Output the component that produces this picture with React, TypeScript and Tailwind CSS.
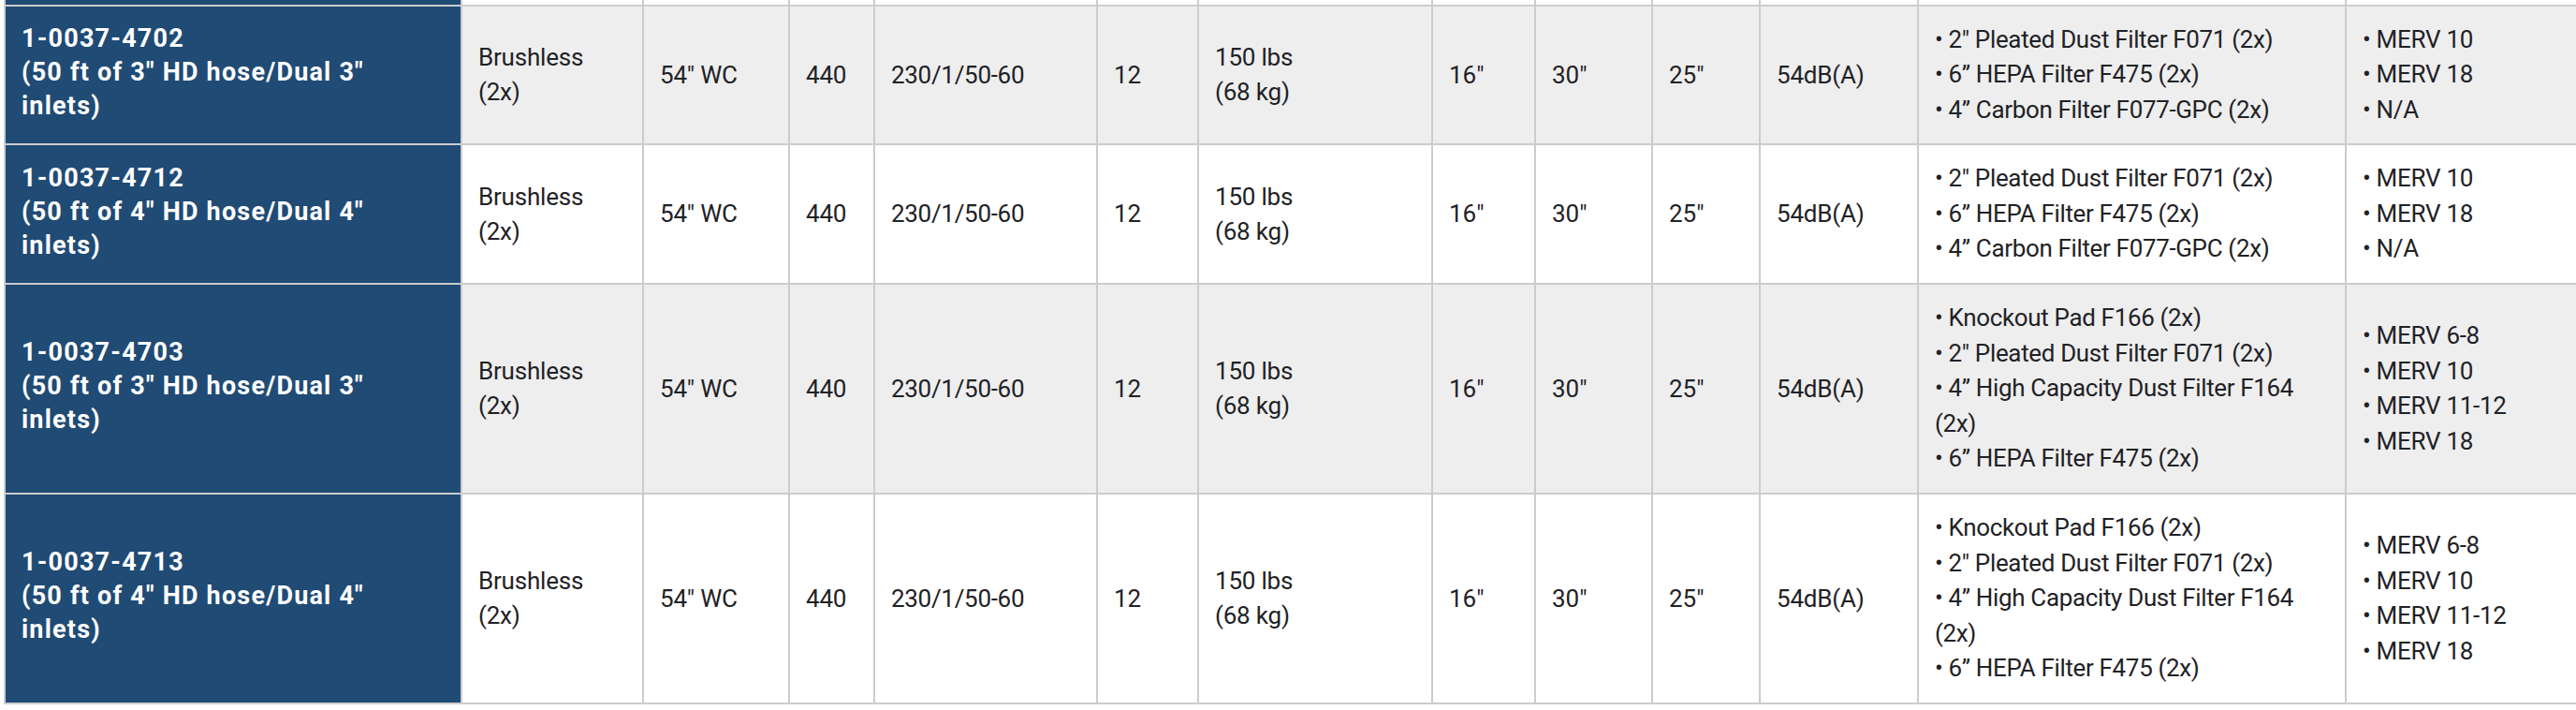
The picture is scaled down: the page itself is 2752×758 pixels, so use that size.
import React from "react";

type Row = {
  model: string;
  desc: string;
  filters: string[][];
  merv: string[];
  gray: boolean;
  h: string;
};

const filtersA = [
  ['2" Pleated Dust Filter F071 (2x)'],
  ["6\u201D HEPA Filter F475 (2x)"],
  ["4\u201D Carbon Filter F077-GPC (2x)"],
];
const filtersB = [
  ["Knockout Pad F166 (2x)"],
  ['2" Pleated Dust Filter F071 (2x)'],
  ["4\u201D High Capacity Dust Filter F164", "(2x)"],
  ["6\u201D HEPA Filter F475 (2x)"],
];

const rows: Row[] = [
  {
    model: "1-0037-4702",
    desc: '(50 ft of 3" HD hose/Dual 3"',
    filters: filtersA,
    merv: ["MERV 10", "MERV 18", "N/A"],
    gray: true,
    h: "h-[148px]",
  },
  {
    model: "1-0037-4712",
    desc: '(50 ft of 4" HD hose/Dual 4"',
    filters: filtersA,
    merv: ["MERV 10", "MERV 18", "N/A"],
    gray: false,
    h: "h-[149px]",
  },
  {
    model: "1-0037-4703",
    desc: '(50 ft of 3" HD hose/Dual 3"',
    filters: filtersB,
    merv: ["MERV 6-8", "MERV 10", "MERV 11-12", "MERV 18"],
    gray: true,
    h: "h-[224px]",
  },
  {
    model: "1-0037-4713",
    desc: '(50 ft of 4" HD hose/Dual 4"',
    filters: filtersB,
    merv: ["MERV 6-8", "MERV 10", "MERV 11-12", "MERV 18"],
    gray: false,
    h: "h-[226px] border-b-2",
  },
];

const cell = "flex items-center border-r-2 border-[#cccccc] px-[17px] shrink-0";

function Cells({ r }: { r: Row }) {
  return (
    <>
      <div className={`${cell} w-[488px] bg-[#204b75] pb-[6px]`}>
        <div className="font-bold text-white text-[27px] leading-[36px] tracking-[1.2px] whitespace-nowrap">
          {r.model}
          <br />
          {r.desc}
          <br />
          inlets)
        </div>
      </div>
      <div className={`${cell} w-[194px] tracking-[-0.2px]`}>
        <div className="leading-[37px]">
          Brushless
          <br />
          (2x)
        </div>
      </div>
      <div className={`${cell} w-[156px] tracking-[-0.2px]`}>54" WC</div>
      <div className={`${cell} w-[91px] tracking-[-0.2px]`}>440</div>
      <div className={`${cell} w-[238px] tracking-[-0.3px]`}>230/1/50-60</div>
      <div className={`${cell} w-[108px]`}>12</div>
      <div className={`${cell} w-[250px] tracking-[-0.2px]`}>
        <div className="leading-[37px]">
          150 lbs
          <br />
          (68 kg)
        </div>
      </div>
      <div className={`${cell} w-[110px]`}>16"</div>
      <div className={`${cell} w-[125px]`}>30"</div>
      <div className={`${cell} w-[115px]`}>25"</div>
      <div className={`${cell} w-[169px] tracking-[-0.2px]`}>54dB(A)</div>
      <div className={`${cell} w-[457px]`}>
        <ul className="leading-[37.5px] whitespace-nowrap tracking-[-0.35px]">
          {r.filters.map((f, i) => (
            <li key={i}>
              {"\u2022 "}
              {f[0]}
              {f[1] ? (
                <>
                  <br />
                  {f[1]}
                </>
              ) : null}
            </li>
          ))}
        </ul>
      </div>
      <div className={`${cell} w-[320px]`}>
        <ul className="leading-[37.5px] whitespace-nowrap tracking-[-0.3px]">
          {r.merv.map((m, i) => (
            <li key={i}>{"\u2022 " + m}</li>
          ))}
        </ul>
      </div>
    </>
  );
}

export default function App() {
  return (
    <div
      className="w-full h-[758px] overflow-hidden bg-white pl-[4px] text-[26px] text-[#1f2226]"
      style={{ fontFamily: "Roboto, 'Liberation Sans', sans-serif" }}
    >
      <div className="flex flex-col border-l-2 border-[#cccccc] w-max">
        <div className="flex h-[5px] bg-white">
          <div className="w-[488px] bg-[#204b75] border-r-2 border-[#cccccc] shrink-0" />
          {[194, 156, 91, 238, 108, 250, 110, 125, 115, 169, 457].map((w, i) => (
            <div key={i} className="border-r-2 border-[#cccccc] shrink-0" style={{ width: w }} />
          ))}
          <div className="w-[320px] border-r-2 border-[#cccccc] shrink-0" />
        </div>
        {rows.map((r, i) => (
          <div
            key={i}
            className={`flex border-t-2 border-[#cccccc] ${r.h} ${r.gray ? "bg-[#eeeeee]" : "bg-white"}`}
          >
            <Cells r={r} />
          </div>
        ))}
      </div>
    </div>
  );
}
